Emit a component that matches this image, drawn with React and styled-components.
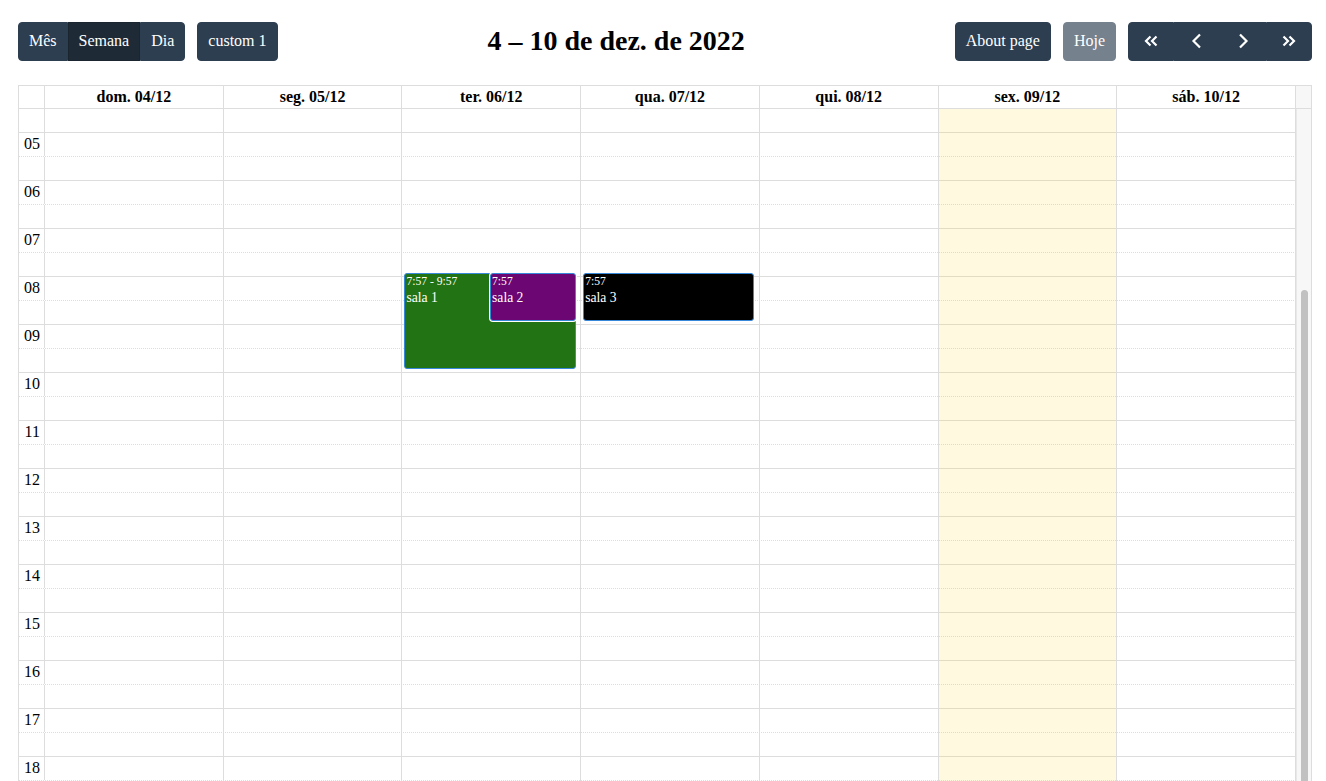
import { useLayoutEffect, useRef } from 'react';
import styled, { createGlobalStyle, css } from 'styled-components';

const GlobalStyle = createGlobalStyle`
  html, body {
    margin: 0;
    overflow: hidden;
    background: #fff;
  }
  body {
    font-family: 'Liberation Serif', 'Times New Roman', serif;
    font-size: 16px;
    color: #000;
  }
  * {
    box-sizing: border-box;
  }
`;

const BORDER = '#ddd';
const SLOT_HEIGHT = 24;
const PX_PER_MIN = (SLOT_HEIGHT * 2) / 60;
const SCROLL_TOP = 218;

const days = [
  { label: 'dom. 04/12' },
  { label: 'seg. 05/12' },
  { label: 'ter. 06/12' },
  { label: 'qua. 07/12' },
  { label: 'qui. 08/12' },
  { label: 'sex. 09/12', today: true },
  { label: 'sáb. 10/12' }
];

const events = [
  { day: 2, start: 477, end: 597, time: '7:57 - 9:57', title: 'sala 1', color: '#227314', left: 0 },
  { day: 2, start: 477, end: 537, time: '7:57', title: 'sala 2', color: '#6b0672', left: 50, inset: true },
  { day: 3, start: 477, end: 537, time: '7:57', title: 'sala 3', color: '#000', left: 0 }
];

const slots = Array.from({ length: 48 }, (_, i) => ({
  label: i % 2 === 0 ? String(i / 2).padStart(2, '0') : null,
  minor: i % 2 === 1
}));

function Chevron({ dir, double }) {
  const flip = dir === 'right' ? 'scale(-1,1) translate(-24,0)' : undefined;
  return (
    <svg width="24" height="24" viewBox="0 0 24 24" fill="none" stroke="#fff" strokeWidth="2.2">
      <g transform={flip}>
        {double ? (
          <>
            <polyline points="11.5 7.5 7 12 11.5 16.5" />
            <polyline points="17.5 7.5 13 12 17.5 16.5" />
          </>
        ) : (
          <polyline points="15 5.5 8.5 12 15 18.5" />
        )}
      </g>
    </svg>
  );
}

export default function App() {
  const scrollerRef = useRef(null);

  useLayoutEffect(() => {
    if (scrollerRef.current) scrollerRef.current.scrollTop = SCROLL_TOP;
  }, []);

  return (
    <Page>
      <GlobalStyle />
      <Toolbar>
        <Chunk>
          <ButtonGroup>
            <Button>Mês</Button>
            <Button $active>Semana</Button>
            <Button>Dia</Button>
          </ButtonGroup>
          <Button>custom 1</Button>
        </Chunk>
        <Title>4 – 10 de dez. de 2022</Title>
        <Chunk>
          <Button>About page</Button>
          <Button disabled>Hoje</Button>
          <ButtonGroup>
            <IconButton aria-label="prev year"><Chevron dir="left" double /></IconButton>
            <IconButton aria-label="prev"><Chevron dir="left" /></IconButton>
            <IconButton aria-label="next"><Chevron dir="right" /></IconButton>
            <IconButton aria-label="next year"><Chevron dir="right" double /></IconButton>
          </ButtonGroup>
        </Chunk>
      </Toolbar>

      <Calendar>
        <HeaderRow>
          <HeaderCell />
          {days.map((d) => (
            <HeaderCell key={d.label}>{d.label}</HeaderCell>
          ))}
          <Gutter />
        </HeaderRow>

        <Body>
          <Scroller ref={scrollerRef}>
            <Slots>
              {slots.map((s, i) => (
                <SlotRow key={i} $minor={s.minor}>
                  <SlotLabel>{s.label}</SlotLabel>
                  <SlotLane />
                </SlotRow>
              ))}
              <Columns>
                {days.map((d, di) => (
                  <DayColumn key={d.label} $today={d.today}>
                    <EventsArea>
                      {events
                        .filter((e) => e.day === di)
                        .map((e) => (
                          <Event
                            key={e.title}
                            $color={e.color}
                            $inset={e.inset}
                            style={{
                              top: e.start * PX_PER_MIN,
                              height: (e.end - e.start) * PX_PER_MIN,
                              left: `${e.left}%`
                            }}
                          >
                            <EventTime>{e.time}</EventTime>
                            <EventTitle>{e.title}</EventTitle>
                          </Event>
                        ))}
                    </EventsArea>
                  </DayColumn>
                ))}
              </Columns>
            </Slots>
          </Scroller>
          <ScrollTrack>
            <ScrollThumb />
          </ScrollTrack>
        </Body>
      </Calendar>
    </Page>
  );
}

const Page = styled.div`
  padding: 22px 14px 0 18px;
`;

const Toolbar = styled.div`
  display: flex;
  align-items: center;
  justify-content: space-between;
  margin-bottom: 24px;
`;

const Chunk = styled.div`
  display: flex;
  align-items: center;
  gap: 12px;
`;

const Title = styled.h2`
  margin: 0;
  font-size: 28px;
  font-weight: bold;
`;

const buttonBase = css`
  display: inline-flex;
  align-items: center;
  justify-content: center;
  margin: 0;
  font-family: inherit;
  font-size: 16px;
  line-height: 1.5;
  color: #fff;
  background: #2c3e50;
  border: 1px solid #2c3e50;
  border-radius: 4px;
  cursor: pointer;

  &:disabled {
    opacity: 0.65;
    cursor: default;
  }
`;

const Button = styled.button`
  ${buttonBase}
  padding: 6.4px 10px;

  ${({ $active }) =>
    $active &&
    css`
      background: #1e2b37;
      border-color: #1a252f;
    `}
`;

const IconButton = styled.button`
  ${buttonBase}
  padding: 6.4px 10px;
  width: 46px;
`;

const ButtonGroup = styled.div`
  display: inline-flex;

  & > button {
    border-radius: 0;
  }
  & > button:first-child {
    border-top-left-radius: 4px;
    border-bottom-left-radius: 4px;
  }
  & > button:last-child {
    border-top-right-radius: 4px;
    border-bottom-right-radius: 4px;
  }
`;

const Calendar = styled.div`
  border: 1px solid ${BORDER};
  border-bottom: none;
`;

const HeaderRow = styled.div`
  display: grid;
  grid-template-columns: 26px repeat(7, 1fr) 15px;
`;

const HeaderCell = styled.div`
  padding: 2px 4px;
  line-height: 18px;
  height: 23px;
  text-align: center;
  font-weight: bold;
  border-right: 1px solid ${BORDER};
  border-bottom: 1px solid ${BORDER};
`;

const Gutter = styled.div`
  background: #f7f7f7;
  border-bottom: 1px solid ${BORDER};
`;

const Body = styled.div`
  display: flex;
  height: 935px;
`;

const Scroller = styled.div`
  flex: 1;
  min-width: 0;
  overflow-y: scroll;
  overflow-x: hidden;
  scrollbar-width: none;

  &::-webkit-scrollbar {
    display: none;
  }
`;

const ScrollTrack = styled.div`
  flex: 0 0 15px;
  padding: 181px 3px 0 4px;
  background: #f7f7f7;
  border-left: 1px solid #e8e8e8;
`;

const ScrollThumb = styled.div`
  height: 760px;
  background: #c1c1c1;
  border-radius: 4px;
`;

const Slots = styled.div`
  position: relative;
`;

const SlotRow = styled.div`
  display: grid;
  grid-template-columns: 26px 1fr;
  height: ${SLOT_HEIGHT}px;
  border-top: 1px ${({ $minor }) => ($minor ? 'dotted' : 'solid')} ${BORDER};

  &:first-child {
    border-top-color: transparent;
  }
`;

const SlotLabel = styled.div`
  display: flex;
  align-items: center;
  justify-content: flex-end;
  padding: 0 4px;
  border-right: 1px solid ${BORDER};
  white-space: nowrap;
`;

const SlotLane = styled.div``;

const Columns = styled.div`
  position: absolute;
  top: 0;
  bottom: 0;
  left: 26px;
  right: 0;
  display: grid;
  grid-template-columns: repeat(7, 1fr);
`;

const DayColumn = styled.div`
  position: relative;
  border-right: 1px solid ${BORDER};
  background: ${({ $today }) => ($today ? 'rgba(255, 220, 40, 0.15)' : 'transparent')};
`;

const EventsArea = styled.div`
  position: absolute;
  top: 0;
  bottom: 0;
  left: 2px;
  right: 2.5%;
`;

const Event = styled.div`
  position: absolute;
  right: 0;
  padding: 1px 1px 0;
  overflow: hidden;
  color: #fff;
  font-size: 13.6px;
  background: ${({ $color }) => $color};
  border: 1px solid #3788d8;
  border-radius: 3px;
  box-shadow: ${({ $inset }) => ($inset ? '0 0 0 1px #fff' : 'none')};
`;

const EventTime = styled.div`
  font-size: 11.6px;
  line-height: 14px;
  white-space: nowrap;
`;

const EventTitle = styled.div`
  line-height: 17px;
`;
